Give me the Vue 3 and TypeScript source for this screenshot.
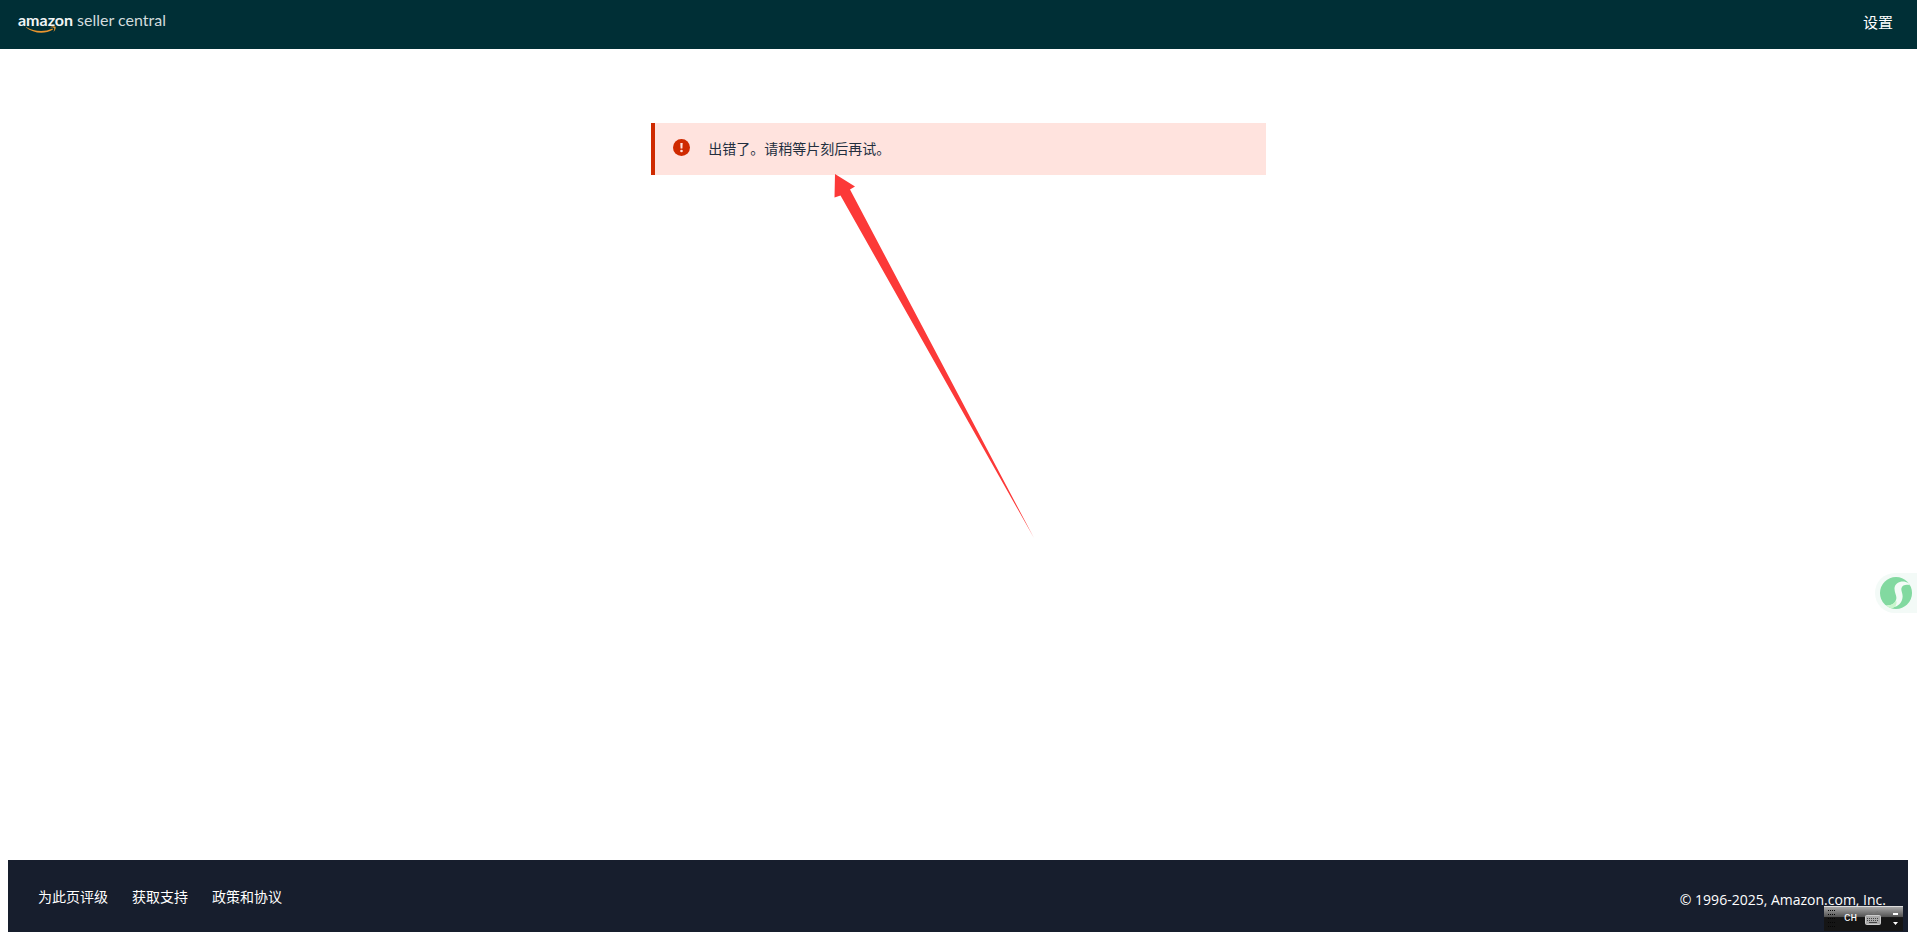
<script setup lang="ts">
interface FooterLink {
  label: string
  href: string
}

const footerLinks: FooterLink[] = [
  { label: '为此页评级', href: '#rate' },
  { label: '获取支持', href: '#support' },
  { label: '政策和协议', href: '#policies' },
]

const gripDots: { x: number; y: number }[] = []
for (let row = 0; row < 5; row++) {
  for (let col = 0; col < 4; col++) {
    gripDots.push({ x: col * 2, y: row * 4 })
  }
}
</script>

<template>
  <div class="page">
    <header class="topbar">
      <a class="logo" href="#home" aria-label="amazon seller central">
        <span class="brand">
          amazon
          <svg class="smile" viewBox="0 0 31 8" aria-hidden="true">
            <path d="M0 1C8 5.500 18 6.500 26.500 2.500L27 3.500C18 9 7 7 0 1.500Z" fill="#e9952f" />
            <path d="M24 1.200C26 0 29 0 29.600 .8C30 2.500 29 4.800 27.500 6C28 4.500 28.600 2.500 28 1.900C27.300 1.300 25.500 1.400 24 1.200Z" fill="#e9952f" />
          </svg>
        </span>
        <span class="product">seller central</span>
      </a>
      <a class="settings" href="#settings">设置</a>
    </header>

    <main class="content">
      <div class="alert" role="alert">
        <svg class="alert-icon" viewBox="0 0 17 17" aria-hidden="true">
          <circle cx="8.500" cy="8.500" r="8.500" fill="#cf2a00" />
          <path d="M7.300 4h2.400l-.3 5.600H7.600z" fill="#ffe3de" />
          <circle cx="8.500" cy="12" r="1.300" fill="#ffe3de" />
        </svg>
        <span class="message">出错了。请稍等片刻后再试。</span>
        <svg class="arrow" viewBox="0 0 200 364" aria-hidden="true">
          <path d="M1 0L21 12.500L16 15.500L200 364L6.500 21.500L0.500 23.500Z" fill="#fc3938" />
        </svg>
      </div>
    </main>

    <footer class="footer">
      <nav class="links">
        <a v-for="link in footerLinks" :key="link.href" :href="link.href">{{ link.label }}</a>
      </nav>
      <span class="copyright">© 1996-2025, Amazon.com, Inc.</span>
    </footer>

    <button class="assistant" type="button" aria-label="助手">
      <svg viewBox="0 0 32 32" aria-hidden="true">
        <circle cx="16" cy="16" r="16" fill="#82d9a0" />
        <path d="M28.500 6C23 2.500 15 5 14.500 11C14.200 16 17.500 19 16 23C14.500 27.500 10 28.500 6 28.500C12 33 20 29 22 23C24 17 20.500 14.500 21.500 11C22.500 8 26 7 30 8.200Z" fill="#f4fbf7" />
        <path d="M6 28.500C10 28.500 14 27.500 16 23.500C17.500 26 16 30 12 31.500C10 31 8 30 6 28.500Z" fill="#c9f6cc" />
      </svg>
    </button>

    <div class="ime">
      <svg class="grip" viewBox="0 0 8 18" aria-hidden="true">
        <rect v-for="(dot, i) in gripDots" :key="i" :x="dot.x" :y="dot.y" width="1" height="1" />
      </svg>
      <span class="lang">CH</span>
      <svg class="keyboard" viewBox="0 0 16 14" aria-hidden="true">
        <path d="M3 4C4 1 6 1.500 8 2.500S11 1 13 .5" fill="none" stroke="#777" />
        <rect x=".5" y="4.500" width="15" height="9" rx="1" fill="#aaa" stroke="#ccc" />
        <path d="M2 7.500h12M2 9.500h12" stroke="#444" stroke-dasharray="1 1" />
        <path d="M4 11.500h8" stroke="#444" />
      </svg>
      <svg class="marks" viewBox="0 0 5 12" aria-hidden="true">
        <path d="M0 0h5v2H0zM0 9h5L2.500 12z" fill="#fff" />
      </svg>
    </div>
  </div>
</template>

<style>
body {
  margin: 0;
}
</style>

<style scoped>
.page {
  position: relative;
  display: flex;
  flex-direction: column;
  min-height: 100vh;
  overflow: hidden;
  background: #fff;
  font-family: "Open Sans", "Noto Sans CJK SC", sans-serif;
  font-size: 14px;
  line-height: 20px;
}

a {
  color: #fff;
  text-decoration: none;
}

.topbar {
  display: flex;
  align-items: center;
  justify-content: space-between;
  height: 49px;
  padding: 0 24px 0 18px;
  box-sizing: border-box;
  background: #002f36;
}

.logo {
  display: flex;
  gap: 4px;
  padding-bottom: 10px;
  font-family: Lato, sans-serif;
  font-size: 16px;
  color: #f2f5f5;
}

.brand {
  position: relative;
  font-weight: 700;
}

.product {
  color: #d3dcdd;
}

.smile {
  position: absolute;
  left: 8px;
  top: 16px;
  width: 31px;
  height: 8px;
}

.settings {
  padding-bottom: 6px;
  font-family: "Noto Sans CJK SC", sans-serif;
  font-size: 15px;
}

.content {
  flex: 1;
  padding-top: 74px;
}

.alert {
  position: relative;
  display: flex;
  align-items: center;
  width: 32.05%;
  height: 52px;
  margin: 0 auto;
  padding-left: 18px;
  box-sizing: border-box;
  border-left: 4px solid #cf2a00;
  background: #ffe3de;
  color: #232f3e;
  font-family: "Noto Sans CJK SC", sans-serif;
}

.alert-icon {
  width: 17px;
  height: 17px;
  margin: 0 18px 4px 0;
}

.message {
  padding-bottom: 2px;
}

.arrow {
  position: absolute;
  left: 179px;
  top: 51px;
  width: 200px;
  height: 364px;
}

.footer {
  display: flex;
  justify-content: space-between;
  align-items: center;
  height: 72px;
  margin: 0 9px 0 8px;
  padding: 0 22px 0 30px;
  box-sizing: border-box;
  background: #171e2d;
  color: #fff;
}

.links {
  display: flex;
  gap: 24px;
  font-family: "Noto Sans CJK SC", sans-serif;
}

.copyright {
  padding-top: 8px;
  font-weight: 500;
}

.assistant {
  position: absolute;
  right: 0;
  top: 573px;
  display: flex;
  width: 42px;
  height: 40px;
  padding: 4px 5px;
  border: 0;
  border-radius: 20px 0 0 20px;
  background: #f3faf7;
}

.assistant svg {
  width: 32px;
  height: 32px;
}

.ime {
  position: absolute;
  right: 14px;
  bottom: 1px;
  display: flex;
  align-items: center;
  width: 79px;
  height: 25px;
  padding: 0 5px 0 4px;
  box-sizing: border-box;
  border-top: 1px solid #ddd;
  background: linear-gradient(#a8a8a8, #555 40%, #151515 44%, #151515);
  color: #fff;
  font-family: "Liberation Mono", monospace;
  font-size: 11px;
}

.grip {
  width: 8px;
  height: 18px;
  fill: #050505;
}

.lang {
  margin-left: 8px;
  padding-bottom: 2px;
}

.keyboard {
  width: 16px;
  height: 14px;
  margin-left: 8px;
  margin-bottom: 2px;
}

.marks {
  width: 5px;
  height: 12px;
  margin-left: auto;
}
</style>
